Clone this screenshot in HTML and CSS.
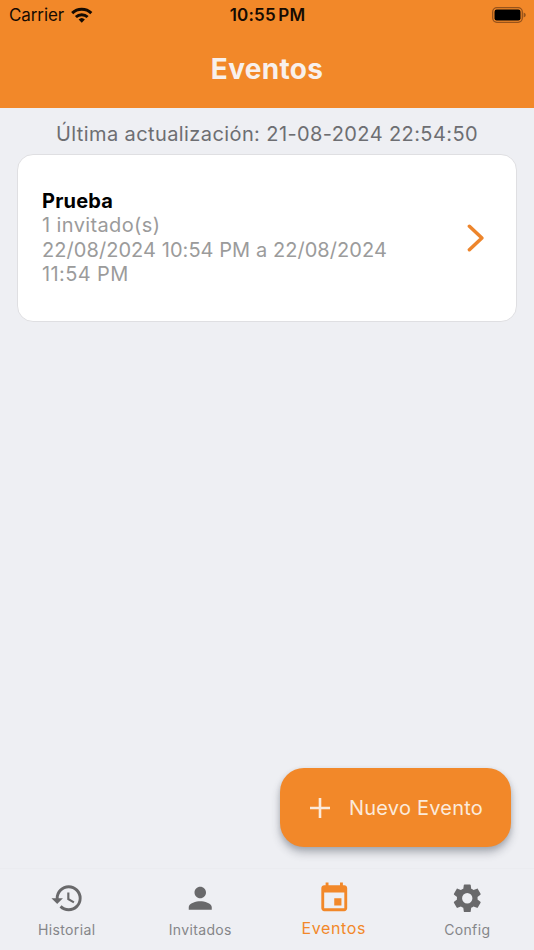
FILE: index.html
```html
<!DOCTYPE html>
<html lang="es">
<head>
<meta charset="utf-8">
<title>Eventos</title>
<link rel="stylesheet" href="styles.css">
</head>
<body>
<div class="app">
  <header class="header">
    <div class="status">
      <div class="carrier"><span>Carrier</span>
        <svg class="wifi" viewBox="0 0 22 16"><g fill="none" stroke="#160b02" stroke-width="3"><path d="M1.2 6.1a14 14 0 0 1 19.6 0"/><path d="M5 10.1a8.6 8.6 0 0 1 12 0"/></g><path fill="#160b02" d="M11 16l-3.2-3.3a4.6 4.6 0 0 1 6.4 0z"/></svg>
      </div>
      <div class="clock">10:55 PM</div>
      <svg class="battery" viewBox="0 0 34 16"><rect x=".7" y=".7" width="29.6" height="14.6" rx="4.2" fill="none" stroke="#97531b" stroke-width="1.3"/><rect x="2.5" y="2.6" width="26" height="10.8" rx="2.2"/><path d="M31.6 5.6q2.2.8 2.2 2.4t-2.2 2.4z" fill="#97531b"/></svg>
    </div>
    <h1 class="title">Eventos</h1>
  </header>
  <main class="content">
    <p class="updated">Última actualización: 21-08-2024 22:54:50</p>
    <article class="card">
      <div class="details">
        <h2 class="name">Prueba</h2>
        <p class="guests">1 invitado(s)</p>
        <p class="dates"><span class="range">22/08/2024 10:54 PM a 22/08/2024</span><br>11:54 PM</p>
      </div>
      <svg class="chevron" viewBox="0 0 18 28"><path d="M2.4 2.3L14.9 14 2.4 25.7" fill="none" stroke="#ed852c" stroke-width="3.5" stroke-linecap="round" stroke-linejoin="round"/></svg>
    </article>
    <button class="fab">
      <svg class="plus" viewBox="0 0 20 20"><path d="M10 0v20M0 10h20" stroke="#fbeadb" stroke-width="2.6"/></svg>
      <span>Nuevo Evento</span>
    </button>
  </main>
  <nav class="tabs">
    <a class="tab"><svg class="icon" viewBox="0 0 24 24"><path d="M13 3a9 9 0 0 0-9 9H1l3.89 3.89.07.14L9 12H6c0-3.87 3.13-7 7-7s7 3.13 7 7-3.13 7-7 7c-1.93 0-3.68-.79-4.94-2.06l-1.42 1.42A8.954 8.954 0 0 0 13 21a9 9 0 0 0 0-18zm-1 5v5l4.28 2.54.72-1.21-3.5-2.08V8H12z"/></svg><span class="label">Historial</span></a>
    <a class="tab"><svg class="icon" viewBox="0 0 24 24"><path d="M12 12c2.21 0 4-1.79 4-4s-1.79-4-4-4-4 1.79-4 4 1.79 4 4 4zm0 2c-2.67 0-8 1.34-8 4v2h16v-2c0-2.66-5.33-4-8-4z"/></svg><span class="label">Invitados</span></a>
    <a class="tab active"><svg class="icon" viewBox="0 0 24 24"><path d="M17 12h-5v5h5v-5zM16 1v2H8V1H6v2H5c-1.11 0-1.99.9-1.99 2L3 19c0 1.1.89 2 2 2h14c1.1 0 2-.9 2-2V5c0-1.1-.9-2-2-2h-1V1h-2zm3 18H5V8h14v11z"/></svg><span class="label">Eventos</span></a>
    <a class="tab"><svg class="icon" viewBox="0 0 24 24"><path d="M19.14 12.94c.04-.3.06-.61.06-.94 0-.32-.02-.64-.07-.94l2.03-1.58c.18-.14.23-.41.12-.61l-1.92-3.32c-.12-.22-.37-.29-.59-.22l-2.39.96c-.5-.38-1.03-.7-1.62-.94l-.36-2.54c-.04-.24-.24-.41-.48-.41h-3.84c-.24 0-.43.17-.47.41l-.36 2.54c-.59.24-1.13.57-1.62.94l-2.39-.96c-.22-.08-.47 0-.59.22L2.74 8.87c-.12.21-.08.47.12.61l2.03 1.58c-.05.3-.09.63-.09.94s.02.64.07.94l-2.03 1.58c-.18.14-.23.41-.12.61l1.92 3.32c.12.22.37.29.59.22l2.39-.96c.5.38 1.03.7 1.62.94l.36 2.54c.05.24.24.41.48.41h3.84c.24 0 .44-.17.47-.41l.36-2.54c.59-.24 1.13-.56 1.62-.94l2.39.96c.22.08.47 0 .59-.22l1.92-3.32c.12-.22.07-.47-.12-.61l-2.01-1.58zM12 15.6A3.6 3.6 0 1 1 12 8.4a3.6 3.6 0 0 1 0 7.2z"/></svg><span class="label">Config</span></a>
  </nav>
</div>
</body>
</html>
```
FILE: styles.css
```css
* { box-sizing: border-box; }
body { margin: 0; font-family: Inter, "Liberation Sans", sans-serif; background: #eeeff3; }
h1, h2, p { margin: 0; }
.app { height: 950px; display: flex; flex-direction: column; overflow: hidden; }
.header { height: 108px; background: #f28829; }
.status { height: 29px; padding: 0 8px 0 9px; display: grid; grid-template-columns: 1fr auto 1fr; align-items: center; color: #160b02; }
.carrier { display: flex; align-items: center; gap: 7px; font-size: 17px; letter-spacing: -.1px; }
.wifi { width: 21.5px; height: 16px; }
.clock { font-size: 17px; font-weight: 600; letter-spacing: .2px; word-spacing: -2px; }
.battery { width: 34px; height: 16px; justify-self: end; }
.title { text-align: center; font-size: 28px; line-height: 34px; padding-top: 23px; font-weight: 700; letter-spacing: .3px; color: #f8f0ec; }
.content { flex: 1; display: flex; flex-direction: column; }
.updated { margin-top: 14px; height: 24px; line-height: 24px; text-align: center; font-size: 20px; letter-spacing: .4px; color: #6d6e72; white-space: nowrap; }
.card { margin: 8px 17px 0; height: 168px; border: 1.5px solid #dfdfe2; border-radius: 16px; background: #fff; display: flex; justify-content: space-between; align-items: center; padding: 0 31px 1px 24px; }
.details { font-size: 20px; line-height: 24.2px; color: #9b9b9b; letter-spacing: .38px; white-space: nowrap; }
.name { font-size: 20px; font-weight: 700; color: #000; letter-spacing: .2px; }
.range { letter-spacing: .06px; }
.chevron { width: 18px; height: 28px; margin-top: 1px; }
.fab { margin: auto 23px 21px auto; width: 231px; height: 79px; padding: 0 0 0 30px; border: 0; border-radius: 24px; background: #f28829; color: #fbeadb; display: flex; align-items: center; gap: 19px; font-family: inherit; font-size: 20px; letter-spacing: .22px; white-space: nowrap; box-shadow: 0 6px 9px rgba(50, 55, 70, .3), 0 2px 5px rgba(50, 55, 70, .15); }
.plus { width: 20px; height: 20px; flex: none; }
.tabs { height: 82px; border-top: 1px solid #ebecf0; display: grid; grid-template-columns: repeat(4, 1fr); }
.tab { display: flex; flex-direction: column; align-items: center; padding-top: 12px; color: #858689; }
.icon { width: 34.5px; height: 34.5px; fill: #69696b; }
.label { margin-top: 4px; font-size: 14px; line-height: 20px; letter-spacing: .35px; }
.active { color: #f28829; }
.active .icon { fill: #f28829; }
.active .label { margin-top: 2.5px; font-size: 16px; letter-spacing: .6px; }
```
